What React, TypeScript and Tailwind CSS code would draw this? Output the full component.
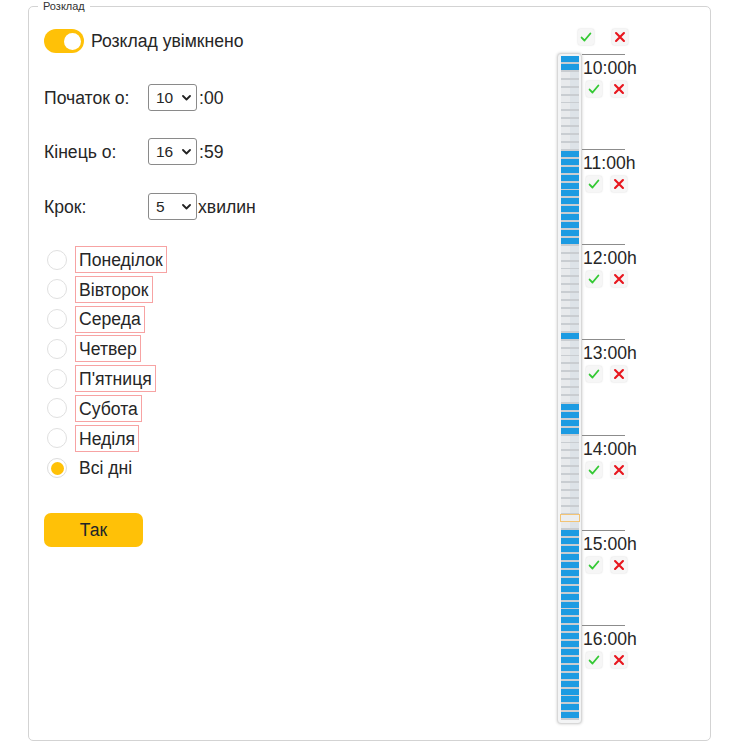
import React from 'react';

// 5-minute slots per hour: 1 = booked, 0 = free, f = focused
const HOURS: { hour: number; slots: string }[] = [
    { hour: 10, slots: '110000000000' },
    { hour: 11, slots: '111111111111' },
    { hour: 12, slots: '000000000001' },
    { hour: 13, slots: '000000001111' },
    { hour: 14, slots: '0000000000f0' },
    { hour: 15, slots: '111111111111' },
    { hour: 16, slots: '111111111111' },
];

const DAYS = ['Понеділок', 'Вівторок', 'Середа', 'Четвер', "П'ятниця", 'Субота', 'Неділя'];

const CheckBtn: React.FC = () => (
    <div className="flex h-[16px] w-[16px] items-center justify-center rounded-[2px] bg-[#f6f6f6] shadow-[0_0_2px_rgba(0,0,0,0.18)]">
        <svg width="14" height="14" viewBox="0 0 16 16">
            <path d="M3 8.6 L6.3 12 L13 4" fill="none" stroke="#34c934" strokeWidth="2.1" strokeLinecap="round" strokeLinejoin="round" />
        </svg>
    </div>
);

const CrossBtn: React.FC = () => (
    <div className="flex h-[16px] w-[16px] items-center justify-center rounded-[2px] bg-[#f6f6f6] shadow-[0_0_2px_rgba(0,0,0,0.18)]">
        <svg width="14" height="14" viewBox="0 0 16 16">
            <path d="M3.5 3.5 L12.5 12.5 M12.5 3.5 L3.5 12.5" fill="none" stroke="#e8161e" strokeWidth="2.5" strokeLinecap="round" />
        </svg>
    </div>
);

const Chevron: React.FC = () => (
    <svg width="9" height="6" viewBox="0 0 9 6">
        <path d="M1 1 L4.5 4.5 L8 1" fill="none" stroke="#222" strokeWidth="1.8" strokeLinecap="round" strokeLinejoin="round" />
    </svg>
);

const SelectBox: React.FC<{ value: string }> = ({ value }) => (
    <div className="flex h-[27px] w-[49px] items-center justify-between rounded-[3px] border border-[#8a8a8a] pl-[7px] pr-[5px] text-[15.5px]">
        <span>{value}</span>
        <Chevron />
    </div>
);

const Slot: React.FC<{ kind: string }> = ({ kind }) => {
    if (kind === '1') {
        return (
            <div className="h-[7.92px] bg-[#c9cdd1]">
                <div className="h-[6px] bg-[#1c9be2]" />
            </div>
        );
    }
    if (kind === 'f') {
        return (
            <div className="h-[7.92px] bg-[#c9cdd1]">
                <div className="h-[6px] bg-[#eceef0] outline-solid outline-[1.5px] outline-[#f3c475]" />
            </div>
        );
    }
    return (
        <div className="h-[7.92px] bg-[#c9cdd1]">
            <div className="h-[6px] bg-[linear-gradient(to_right,#e8eaec_50%,#dde3e8_50%)]" />
        </div>
    );
};

export default function App() {
    return (
        <div className="min-h-screen bg-white pl-[28px] text-[#262626]" style={{ fontFamily: '"Liberation Sans", Arial, sans-serif' }}>
            <fieldset className="w-[683px] rounded-[5px] border border-[#d3d3d3] px-[15px] pb-[16px] pt-[15px]">
                <legend className="ml-[-6px] px-[5px] text-[11px] leading-[13px] text-[#333]">Розклад</legend>

                <div className="flex">
                    <div className="w-[513px] shrink-0 pt-[1px] text-[17.6px]">
                        <div className="flex h-[24px] items-center">
                            <div className="relative h-[24px] w-[40px] rounded-full bg-[#ffc107]">
                                <div className="absolute right-[3px] top-[3.5px] h-[17px] w-[17px] rounded-full bg-white" />
                            </div>
                            <span className="ml-[7px] pt-[1px]">Розклад увімкнено</span>
                        </div>

                        <div className="mt-[31px] flex h-[27px] items-center">
                            <span className="w-[104px] pt-[1px]">Початок о:</span>
                            <SelectBox value="10" />
                            <span className="ml-[2px] pt-[1px]">:00</span>
                        </div>

                        <div className="mt-[27px] flex h-[27px] items-center">
                            <span className="w-[104px] pt-[1px]">Кінець о:</span>
                            <SelectBox value="16" />
                            <span className="ml-[2px] pt-[1px]">:59</span>
                        </div>

                        <div className="mt-[28px] flex h-[27px] items-center">
                            <span className="w-[104px] pt-[1px]">Крок:</span>
                            <SelectBox value="5" />
                            <span className="ml-[1px] pt-[1px]">хвилин</span>
                        </div>

                        <div className="mt-[26px] flex flex-col gap-[2.8px]">
                            {DAYS.map((d) => (
                                <div key={d} className="flex h-[27px] items-center">
                                    <div className="ml-[3px] h-[20px] w-[20px] rounded-full border-[1.5px] border-[#e0e0e0] bg-white" />
                                    <div className="ml-[8px] flex h-[27px] items-center border-[1.5px] border-[#f7a3a3] px-[3px] pt-[1px]">{d}</div>
                                </div>
                            ))}
                            <div className="flex h-[27px] items-center">
                                <div className="ml-[3px] flex h-[20px] w-[20px] items-center justify-center rounded-full border-[1.5px] border-[#dcdcdc] bg-white">
                                    <div className="h-[13px] w-[13px] rounded-full bg-[#ffc107]" />
                                </div>
                                <div className="ml-[8px] flex h-[27px] items-center border-[1.5px] border-transparent px-[3px] pt-[1px]">Всі дні</div>
                            </div>
                        </div>

                        <button className="mt-[31px] flex h-[34px] w-[99px] items-center justify-center rounded-[7px] bg-[#ffc107] pt-[1px] text-[17.6px] text-[#212529]">
                            Так
                        </button>
                    </div>

                    <div className="flex flex-col">
                        <div className="flex h-[17px] items-center">
                            <div className="ml-[21px]">
                                <CheckBtn />
                            </div>
                            <div className="ml-[18px]">
                                <CrossBtn />
                            </div>
                        </div>

                        <div className="mt-[8px] flex">
                            <div className="w-[25px] rounded-[4px] border border-[#d8d8d8] bg-[#f3f4f5] pb-[3px] pl-[3px] pr-[2px] pt-[2px] shadow-[0_0_3px_rgba(0,0,0,0.22)]">
                                {HOURS.map((h) => (
                                    <div key={h.hour}>
                                        {h.slots.split('').map((k, i) => (
                                            <Slot key={i} kind={k} />
                                        ))}
                                    </div>
                                ))}
                            </div>

                            <div className="mt-[1px] flex flex-col">
                                {HOURS.map((h) => (
                                    <div key={h.hour} className="h-[95.15px] w-[43px] border-t border-[#8c8c8c]">
                                        <div className="whitespace-nowrap pl-[1px] pt-[3px] text-[17.6px] leading-[20px]">{h.hour}:00h</div>
                                        <div className="mt-[3px] flex">
                                            <div className="ml-[4px]">
                                                <CheckBtn />
                                            </div>
                                            <div className="ml-[9px]">
                                                <CrossBtn />
                                            </div>
                                        </div>
                                    </div>
                                ))}
                            </div>
                        </div>
                    </div>
                </div>
            </fieldset>
        </div>
    );
}
